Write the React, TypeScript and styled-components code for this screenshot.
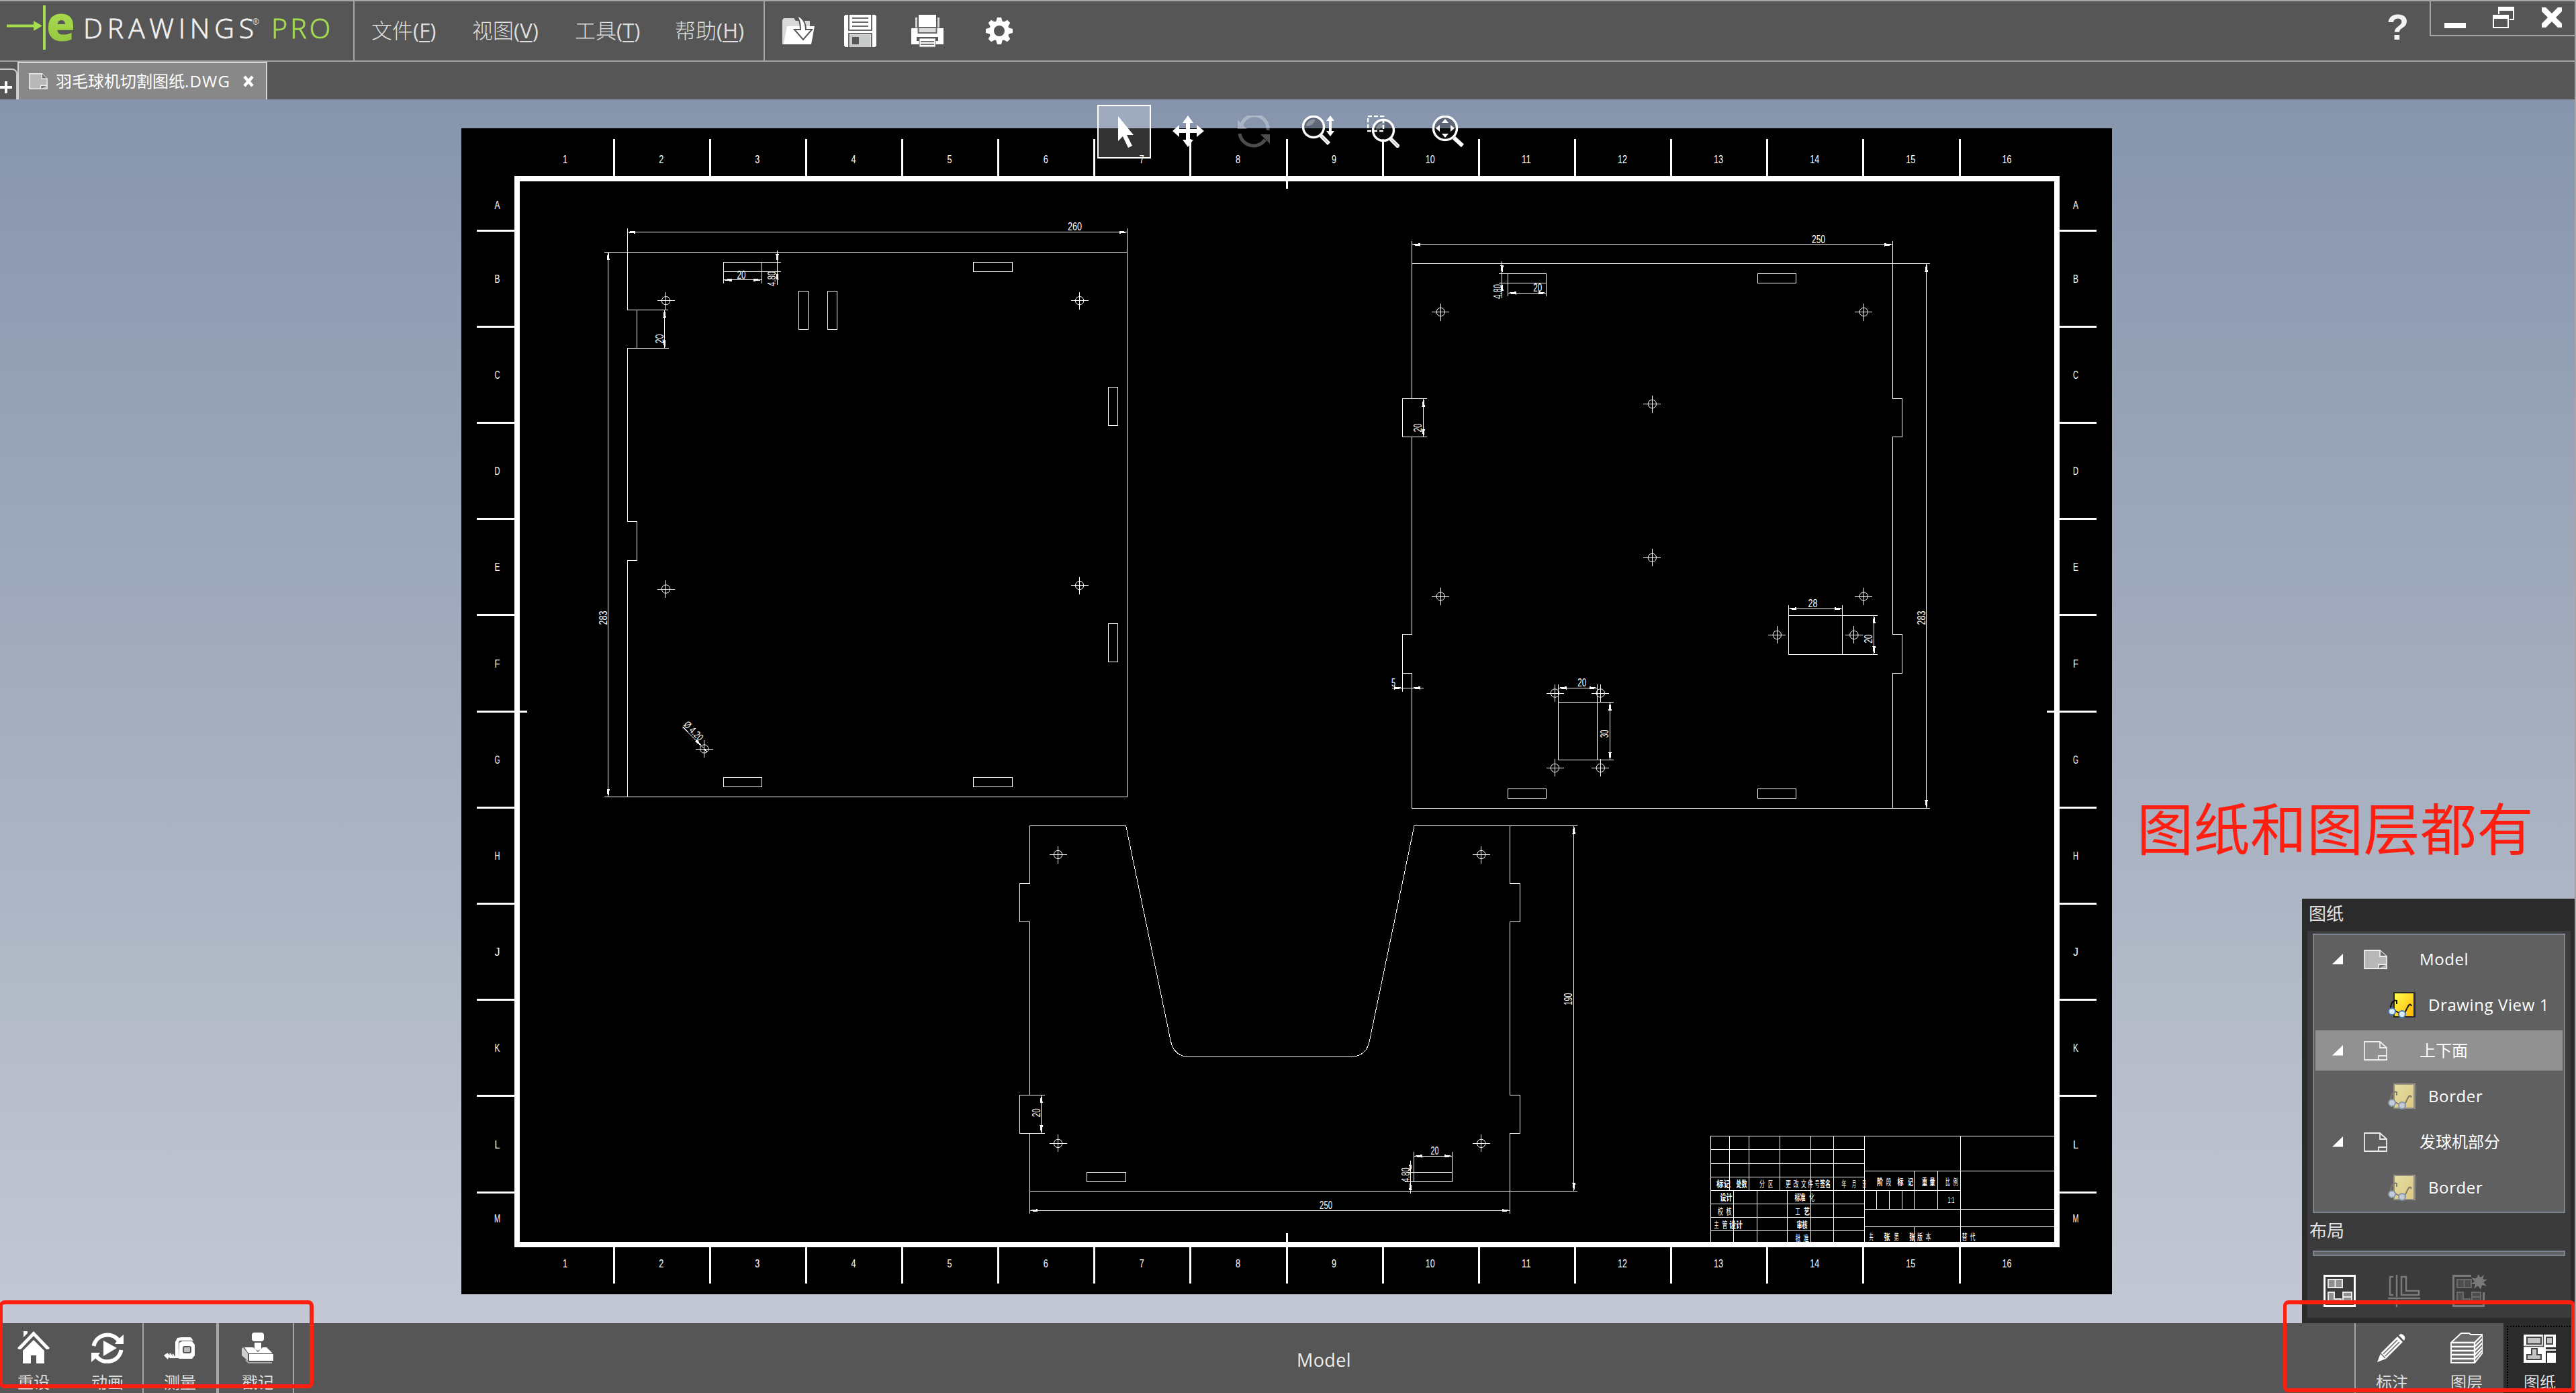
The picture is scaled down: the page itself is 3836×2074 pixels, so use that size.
import React from "react";
import styled, { createGlobalStyle, css } from "styled-components";

const UI_FONT = `"Open Sans", "Noto Sans CJK SC", sans-serif`;

const GlobalStyle = createGlobalStyle`
  * { box-sizing: border-box; }
  body { margin: 0; background: #555655; font-family: ${UI_FONT}; overflow: hidden; }
`;

/* ---------- shell ---------- */

const Window = styled.div`
  position: relative;
  display: flex;
  flex-direction: column;
  width: 3836px;
  height: 2074px;
  border-right: 2px solid #a6a6a6;
  background: #555655;
  overflow: hidden;
`;

const Header = styled.header`
  display: flex;
  flex: none;
  height: 92px;
  border-top: 2px solid #a6a6a6;
  border-bottom: 2px solid #a6a6a6;
`;

const Brand = styled.div`
  width: 528px;
  border-right: 2px solid #a6a6a6;
`;

const MenuBar = styled.nav`
  display: flex;
  align-items: center;
  width: 611px;
  padding: 0 0 3px 25px;
  border-right: 2px solid #a6a6a6;
`;

const MenuItem = styled.span<{ $w: number }>`
  width: ${(p) => p.$w}px;
  color: #dedede;
  font-size: 31px;
  font-weight: 300;
  line-height: 40px;
  white-space: nowrap;
`;

const AccessKey = styled.span`
  font-weight: 400;
  u { text-underline-offset: 4px; text-decoration-thickness: 2px; }
`;

const QuickBar = styled.div`
  display: flex;
  align-items: center;
  flex: 1;
  gap: 50px;
  padding: 0 0 0 25px;
`;

const QuickSlot = styled.div<{ $shift: number }>`
  display: flex;
  margin-left: ${(p) => p.$shift}px;
`;

const HelpMark = styled.div`
  width: 98px;
  padding: 3px 0 0 34px;
  color: #f2f2f2;
  font: 700 54px/70px "Liberation Sans", sans-serif;
`;

const WindowControls = styled.div`
  display: flex;
  width: 216px;
  height: 52px;
  border-left: 2px solid #a6a6a6;
  border-bottom: 2px solid #a6a6a6;
`;

const TabStrip = styled.div`
  display: flex;
  align-items: flex-end;
  flex: none;
  height: 56px;
`;

const NewTab = styled.div`
  display: flex;
  align-items: center;
  width: 26px;
  height: 46px;
  padding-top: 8px;
  border-top: 2px solid #c9c9c9;
  border-right: 2px solid #c9c9c9;
  border-top-right-radius: 8px;
`;

const FileTab = styled.div`
  display: flex;
  align-items: center;
  width: 372px;
  height: 56px;
  padding: 0 0 0 15px;
  border: 2px solid #d4d4d4;
  border-bottom: none;
  background: #888888;
`;

const FileName = styled.span`
  width: 290px;
  padding-left: 12px;
  color: #ffffff;
  font-size: 24px;
  line-height: 30px;
  white-space: nowrap;
`;

const Extension = styled.span`
  letter-spacing: 1.2px;
`;

/* ---------- viewport ---------- */

const Viewport = styled.main`
  flex: 1;
  padding: 43px 0 0 687px;
  background: linear-gradient(180deg, #8695ad 0%, #8e9bb1 12%, #a9b2c2 58%, #c4c8d4 100%);
`;

const SheetDrawing = styled.svg`
  display: block;
  background: #000000;
`;

const ViewTools = styled.div`
  position: absolute;
  left: 1634px;
  top: 156px;
  display: flex;
  gap: 16.4px;
`;

const ToolButton = styled.button<{ $on?: boolean; $dim?: boolean }>`
  display: flex;
  align-items: center;
  justify-content: center;
  width: 80px;
  height: 80px;
  padding: 0;
  border: 2px solid transparent;
  background: transparent;
  ${(p) =>
    p.$on &&
    css`
      border-color: #ffffff;
      background: rgba(255, 255, 255, 0.2);
    `}
  ${(p) => p.$dim && css` opacity: 0.3; `}
`;

/* ---------- sheets panel ---------- */

const Panel = styled.aside`
  position: absolute;
  left: 3428px;
  top: 1338px;
  width: 406px;
  height: 632px;
  padding: 0 6px 8px 8px;
  background: #2b2b2b;
`;

const PanelTitle = styled.h2<{ $h: number }>`
  margin: 0;
  height: ${(p) => p.$h}px;
  padding: 4px 0 0 2px;
  color: #e4e4e4;
  font-size: 26px;
  font-weight: 400;
  line-height: 36px;
`;

const PanelBody = styled.div`
  height: 576px;
  padding: 4px 8px 0 8px;
  background: #3b3b3b;
`;

const Tree = styled.ul`
  display: flex;
  flex-direction: column;
  gap: 8px;
  margin: 0;
  height: 416px;
  padding: 6px 2px;
  border: 2px solid #7d848f;
  background: #606060;
  list-style: none;
`;

const TreeRow = styled.li<{ $selected?: boolean; $child?: boolean }>`
  display: flex;
  align-items: center;
  height: 60px;
  padding-left: ${(p) => (p.$child ? 108 : 25)}px;
  background: ${(p) => (p.$selected ? "#919191" : "transparent")};
  color: #ffffff;
  font-size: 24px;
  white-space: nowrap;
  gap: ${(p) => (p.$child ? 19 : 31)}px;
`;

const TreeLabel = styled.span<{ $indent?: number; $latin?: boolean }>`
  padding-left: ${(p) => p.$indent ?? 0}px;
  letter-spacing: ${(p) => (p.$latin ? "0.6px" : "normal")};
  line-height: 32px;
`;

const LayoutTitle = styled(PanelTitle)`
  margin-left: -8px;
  padding: 8px 0 0 3px;
`;

const LayoutSlot = styled.div`
  height: 8px;
  border: 2px solid #7d848f;
  background: #606060;
`;

const LayoutTools = styled.div`
  display: flex;
  gap: 48px;
  padding: 28px 0 0 16px;
`;

const Faded = styled.span`
  display: flex;
  opacity: 0.32;
`;

/* ---------- bottom bar ---------- */

const BottomBar = styled.footer`
  display: flex;
  flex: none;
  height: 104px;
`;

const BarGroup = styled.div<{ $pl: number; $pr: number; $gap?: number; $line?: number }>`
  display: flex;
  gap: ${(p) => p.$gap ?? 0}px;
  padding: 12px ${(p) => p.$pr}px 0 ${(p) => p.$pl}px;
  border-right: ${(p) => p.$line ?? 0}px solid #a6a6a6;
`;

const BarItem = styled.div`
  display: flex;
  flex-direction: column;
  gap: 13px;
  width: 48px;
  color: #dedede;
  font-size: 24px;
  line-height: 30px;
  white-space: nowrap;
`;

const ActiveSlot = styled.div`
  width: 106px;
  padding: 4px 2px 0 5px;
  background: #2b2b2b;
`;

const FocusFrame = styled.div`
  height: 110px;
  padding: 6px 0 0 23px;
  border: 2px dotted #000000;
`;

const SheetName = styled.div`
  flex: 1;
  padding: 32px 0 0 1493px;
  color: #ececec;
  font-size: 27px;
  letter-spacing: 0.4px;
  line-height: 46px;
`;

/* ---------- red mark-up over the window ---------- */

const MarkBox = styled.div<{ $l: number; $w: number; $h: number }>`
  position: absolute;
  left: ${(p) => p.$l}px;
  top: 1936px;
  width: ${(p) => p.$w}px;
  height: ${(p) => p.$h}px;
  border: 6px solid #ff1f10;
  border-left-width: 5px;
  border-radius: 8px;
`;

const MarkText = styled.div`
  position: absolute;
  left: 3182px;
  top: 1174px;
  color: #ff1f10;
  font-size: 84px;
  letter-spacing: 0.4px;
  line-height: 120px;
  white-space: nowrap;
`;

/* ---------- CAD primitives ---------- */

type TextProps = { x: number; y: number; w: number; s?: number; r?: number; bold?: boolean; children: string };

const CadText = styled.text`
  fill: #ffffff;
  stroke: none;
  text-anchor: middle;
  font-family: "Liberation Sans", "Noto Sans CJK SC", sans-serif;
`;

const T = ({ x, y, w, s = 16, r = 0, bold, children }: TextProps) => (
  <CadText
    x={0}
    y={s * 0.36}
    fontSize={s}
    fontWeight={bold ? 700 : 400}
    textLength={w}
    lengthAdjust="spacingAndGlyphs"
    transform={`translate(${x} ${y}) rotate(${r})`}
  >
    {children}
  </CadText>
);

const Arrow = ({ x, y, r }: { x: number; y: number; r: number }) => (
  <path d="M0 0L2-0.8 12-2.2V2.2L2 0.8Z" fill="#fff" stroke="none" transform={`translate(${x} ${y}) rotate(${r})`} />
);

const HDim = ({ a, b, y }: { a: number; b: number; y: number }) => (
  <g>
    <path d={`M${a} ${y}H${b}`} />
    <Arrow x={a} y={y} r={0} />
    <Arrow x={b} y={y} r={180} />
  </g>
);

const VDim = ({ a, b, x }: { a: number; b: number; x: number }) => (
  <g>
    <path d={`M${x} ${a}V${b}`} />
    <Arrow x={x} y={a} r={90} />
    <Arrow x={x} y={b} r={-90} />
  </g>
);

const Hole = ({ x, y }: { x: number; y: number }) => (
  <g>
    <circle cx={x} cy={y} r={6.2} shapeRendering="auto" />
    <path d={`M${x - 13} ${y}H${x + 13}M${x} ${y - 13}V${y + 13}`} />
  </g>
);

const HSlot = ({ x, y, w = 57.5 }: { x: number; y: number; w?: number }) => <rect x={x} y={y} width={w} height={14} />;
const VSlot = ({ x, y }: { x: number; y: number }) => <rect x={x} y={y} width={14.4} height={57} />;

const PITCH = 143.13;
const ROWS = ["A", "B", "C", "D", "E", "F", "G", "H", "J", "K", "L", "M"];
const rowY = (i: number) => (i === 0 ? 304.5 : i === 11 ? 1814 : 414.6 + (i - 1) * 143.2);

const SheetFrame = () => (
  <g>
    <rect x={769.5} y={266} width={2293.5} height={1586.5} strokeWidth={8} />
    <g strokeWidth={3}>
      {Array.from({ length: 15 }, (_, i) => {
        const x = 914.2 + i * PITCH;
        return <path key={i} d={`M${x} 207V${i === 7 ? 281 : 264}M${x} ${i === 7 ? 1836 : 1854}V1911`} />;
      })}
      {Array.from({ length: 11 }, (_, i) => {
        const y = 343 + i * 143.2;
        return <path key={i} d={`M710 ${y}H${i === 5 ? 785 : 768}M${i === 5 ? 3048 : 3064} ${y}H3122`} />;
      })}
    </g>
    {Array.from({ length: 16 }, (_, i) => {
      const x = 841.5 + i * PITCH;
      const w = i > 8 ? 14 : 7;
      return (
        <g key={i}>
          <T x={x} y={237} w={w} s={17}>{String(i + 1)}</T>
          <T x={x} y={1881} w={w} s={17}>{String(i + 1)}</T>
        </g>
      );
    })}
    {ROWS.map((r, i) => (
      <g key={r}>
        <T x={740.5} y={rowY(i)} w={r === "M" ? 9 : 8} s={17}>{r}</T>
        <T x={3091} y={rowY(i)} w={r === "M" ? 9 : 8} s={17}>{r}</T>
      </g>
    ))}
  </g>
);

const PlateOne = () => (
  <g>
    <path d="M934.3 375.4H1678.5V1186.6H934.3V834.4H948.7V776.3H934.3V518.5H948.7V461H934.3Z" />
    <path d="M934.3 375.4V340M1678.5 375.4V340M900 375.4H934.3M900 1186.6H934.3" />
    <HDim a={934.3} b={1678.5} y={345.6} />
    <T x={1600.4} y={337.5} w={21}>260</T>
    <VDim a={375.4} b={1186.6} x={905.7} />
    <T x={898.5} y={920} w={21} r={-90}>283</T>
    <path d="M948.7 461H995M948.7 518.5H996" />
    <VDim a={461} b={518.5} x={989.6} />
    <T x={982.5} y={504.5} w={14} r={-90}>20</T>
    <HSlot x={1077.5} y={390.4} w={56.5} />
    <HSlot x={1449.5} y={390.4} />
    <HSlot x={1077.5} y={1157.6} w={56.5} />
    <HSlot x={1449.5} y={1157.6} />
    <VSlot x={1189.3} y={433.5} />
    <VSlot x={1232.3} y={433.5} />
    <VSlot x={1650.5} y={576.5} />
    <VSlot x={1650.5} y={928.4} />
    <path d="M1077.5 404V421.5M1134 404V421.5M1134 390.4H1162.7M1134 404.4H1162.7M1157.5 372.7V424" />
    <HDim a={1077.5} b={1134} y={416.8} />
    <Arrow x={1157.5} y={390.4} r={-90} />
    <Arrow x={1157.5} y={404.4} r={90} />
    <T x={1104} y={409} w={13}>20</T>
    <T x={1149.7} y={415} w={22} r={-90}>4.80</T>
    <Hole x={991.6} y={447.7} />
    <Hole x={1607.6} y={447.7} />
    <Hole x={991.6} y={877} />
    <Hole x={1607.6} y={871.6} />
    <Hole x={1048.8} y={1115} />
    <path d="M1016.3 1081.8L1053 1119.4" />
    <Arrow x={1044.5} y={1110.6} r={-134} />
    <T x={1033} y={1088} w={34} r={45} s={15}>Ø 4.20</T>
  </g>
);

const PlateTwo = () => (
  <g>
    <path d="M2102.6 392.5H2818.3V593.6H2832.7V650.5H2818.3V944.7H2832.7V1002.3H2818.3V1203.3H2102.6V1002.3H2088.2V944.7H2102.6V650.5H2088.2V593.6H2102.6Z" />
    <path d="M2102.6 392.5V358.7M2818.3 392.5V358.7M2818.3 392.5H2874M2818.3 1203.3H2874" />
    <HDim a={2102.6} b={2818.3} y={364.4} />
    <T x={2708} y={356.3} w={20}>250</T>
    <VDim a={392.5} b={1203.3} x={2868.6} />
    <T x={2860.8} y={920} w={21} r={-90}>283</T>
    <path d="M2102.6 593.6H2125M2102.6 650.5H2125M2088.2 1002.3V1029.5M2073.3 1024.4H2119.8" />
    <VDim a={593.6} b={650.5} x={2119.6} />
    <T x={2111.5} y={637} w={13} r={-90}>20</T>
    <Arrow x={2088.2} y={1024.4} r={180} />
    <Arrow x={2102.6} y={1024.4} r={0} />
    <T x={2075} y={1016.5} w={6}>5</T>
    <HSlot x={2245.5} y={407.4} w={57} />
    <HSlot x={2617.4} y={407.4} />
    <HSlot x={2245.5} y={1174.4} w={57} />
    <HSlot x={2617.4} y={1174.4} />
    <path d="M2236.7 389V444M2231.7 407.4H2245.5M2231.7 421.4H2245.5M2245.5 421V441M2302.5 421V441" />
    <Arrow x={2236.7} y={407.4} r={-90} />
    <Arrow x={2236.7} y={421.4} r={90} />
    <HDim a={2245.5} b={2302.5} y={436.4} />
    <T x={2289.7} y={428.5} w={13}>20</T>
    <T x={2230} y={434} w={22} r={-90}>4.80</T>
    <Hole x={2145.3} y={464.5} />
    <Hole x={2775.3} y={464.5} />
    <Hole x={2460.3} y={601.5} />
    <Hole x={2460.3} y={830.4} />
    <Hole x={2145.3} y={888} />
    <Hole x={2775.3} y={888} />
    <Hole x={2646.3} y={945.4} />
    <Hole x={2760.9} y={945.4} />
    <Hole x={2315.5} y={1032} />
    <Hole x={2383.3} y={1032} />
    <Hole x={2315.5} y={1143.4} />
    <Hole x={2383.3} y={1143.4} />
    <rect x={2663.4} y={916.4} width={80.4} height={58} />
    <path d="M2663.4 916.4V901M2743.8 916.4V901M2743.8 916.4H2796M2743.8 974.4H2796" />
    <HDim a={2663.4} b={2743.8} y={906.4} />
    <T x={2699.5} y={898.5} w={14}>28</T>
    <VDim a={916.4} b={974.4} x={2790.6} />
    <T x={2782.7} y={951.2} w={13} r={-90}>20</T>
    <rect x={2320.7} y={1045.6} width={58} height={86} />
    <path d="M2320.7 1045.6V1019M2378.7 1045.6V1019M2378.7 1045.6H2402.8M2378.7 1131.6H2402.8" />
    <HDim a={2320.7} b={2378.7} y={1024.4} />
    <T x={2355.7} y={1016.5} w={13}>20</T>
    <VDim a={1045.6} b={1131.6} x={2397.5} />
    <T x={2389.6} y={1092.4} w={12} r={-90}>30</T>
  </g>
);

const PlateThree = () => (
  <g>
    <path d="M1533.4 1229.5H1676.6L1743.5 1550.7Q1748.6 1573.4 1771.6 1573.4H2011Q2034 1573.4 2039.2 1550.7L2106 1229.5H2248.6V1315.6H2263.6V1372.4H2248.6V1630.4H2263.6V1687.4H2248.6V1773.4H1533.4V1687.4H1518.4V1630.4H1533.4V1372.4H1518.4V1315.6H1533.4Z" />
    <path d="M2248.6 1229.5H2349M2248.6 1773.4H2349M1533.4 1773.4V1807.4M2248.6 1773.4V1807.4" />
    <VDim a={1229.5} b={1773.4} x={2343.6} />
    <T x={2335.6} y={1487.4} w={18} r={-90}>190</T>
    <HDim a={1533.4} b={2248.6} y={1802.4} />
    <T x={1974.6} y={1794.6} w={19}>250</T>
    <path d="M1533.4 1630.4H1556.3M1533.4 1687.4H1556.3" />
    <VDim a={1630.4} b={1687.4} x={1550.6} />
    <T x={1542.8} y={1656.8} w={13} r={-90}>20</T>
    <HSlot x={1618.6} y={1745.5} w={58} />
    <HSlot x={2105.5} y={1745.5} w={57} />
    <path d="M2105.5 1745V1715.4M2162.5 1745V1715.4M2100.4 1727.6V1776.7M2095 1745.5H2105.5M2092 1759.5H2105.5" />
    <HDim a={2105.5} b={2162.5} y={1721.4} />
    <T x={2136.6} y={1713.5} w={12}>20</T>
    <Arrow x={2100.4} y={1745.5} r={-90} />
    <Arrow x={2100.4} y={1759.5} r={90} />
    <T x={2092.8} y={1749.3} w={22} r={-90}>4.80</T>
    <Hole x={1575.6} y={1272.5} />
    <Hole x={2205.8} y={1272.5} />
    <Hole x={1575.6} y={1702.4} />
    <Hole x={2205.8} y={1702.4} />
  </g>
);

const CELLS: [string, number, number, number, boolean?][] = [
  ["标记", 2566.5, 1762.5, 21, true],
  ["处数", 2593.5, 1762.5, 16, true],
  ["分", 2624, 1762.5, 8],
  ["区", 2636.5, 1762.5, 7],
  ["更", 2663, 1762.5, 8],
  ["改", 2674.5, 1762.5, 8],
  ["文", 2686, 1762.5, 8],
  ["件", 2696, 1762.5, 8],
  ["号", 2706, 1762.5, 7],
  ["签名", 2718, 1762.5, 16, true],
  ["年", 2746, 1762.5, 7],
  ["月", 2761, 1762.5, 6],
  ["日", 2776, 1762.5, 6],
  ["设计", 2570.5, 1782, 18, true],
  ["标准", 2680.5, 1782, 16, true],
  ["化", 2698, 1782, 8],
  ["校", 2562, 1803, 8],
  ["核", 2574.5, 1803, 8],
  ["工", 2677, 1803, 7],
  ["艺", 2690.5, 1803, 9, true],
  ["主", 2556, 1823.5, 7],
  ["管", 2568.5, 1823.5, 8],
  ["设计", 2585, 1823.5, 20, true],
  ["审核", 2683.5, 1823.5, 16, true],
  ["批", 2677.5, 1843, 8],
  ["准", 2689.5, 1843, 8],
  ["阶", 2799.5, 1759, 9, true],
  ["段", 2812.5, 1759, 8],
  ["标", 2830, 1759, 9, true],
  ["记", 2845, 1759, 8, true],
  ["重", 2866, 1759, 8, true],
  ["量", 2877.5, 1759, 8, true],
  ["比", 2900.5, 1759, 7],
  ["例", 2912, 1759, 7],
  ["1:1", 2905.5, 1786.5, 10],
  ["共", 2786.5, 1841, 6],
  ["张", 2810, 1841, 9, true],
  ["第", 2824, 1841, 7],
  ["张", 2847.5, 1841, 9, true],
  ["版", 2859, 1841, 8],
  ["本", 2871.5, 1841, 8],
  ["替", 2925.5, 1841, 8],
  ["代", 2937.5, 1841, 8],
];

const TitleBlock = () => (
  <g>
    <path d="M2547.6 1850V1691.4H3059M2575.4 1691.4V1772.4M2604.4 1691.4V1772.4M2650.4 1691.4V1772.4M2696.6 1691.4V1849M2730.4 1691.4V1849M2776.5 1691.4V1849M2919.4 1691.4V1849" />
    <path d="M2547.6 1711.4H2776.5M2547.6 1732.4H2776.5M2547.6 1752.4H2776.5M2547.6 1772.4H2919.4M2547.6 1792.4H2776.5M2547.6 1812.4H2776.5M2547.6 1832.4H2776.5" />
    <path d="M2581.4 1772.4V1849M2616.6 1772.4V1849M2661.4 1772.4V1849M2776.5 1743.4H3059M2776.5 1800.4H3059M2776.5 1826.4H3059" />
    <path d="M2850.6 1743.4V1800.4M2885.6 1743.4V1800.4M2794.4 1772.4V1800.4M2813.6 1772.4V1800.4M2832.5 1772.4V1800.4M2850.6 1826.4V1849" />
    {CELLS.map(([t, x, y, w, b], i) => (
      <T key={i} x={x} y={y} w={w} s={13} bold={b}>{t}</T>
    ))}
  </g>
);

/* ---------- icons ---------- */

const Icon = ({ w = 48, h = 48, children }: { w?: number; h?: number; children: React.ReactNode }) => (
  <svg width={w} height={h} viewBox={`0 0 ${w} ${h}`} fill="none">
    {children}
  </svg>
);

const Logo = () => (
  <svg width="526" height="88" viewBox="0 2 526 88">
    <defs>
      <linearGradient id="lime" x1="0" y1="0" x2="0" y2="1">
        <stop offset="0" stopColor="#b9ea5a" />
        <stop offset="1" stopColor="#8cbf3a" />
      </linearGradient>
    </defs>
    <rect x="64" y="8" width="4" height="66" fill="#a6dc50" />
    <path d="M10 36.5H50V31L63 38.5 50 46V40.5H10Z" fill="#a6dc50" />
    <text x="69" y="61" fontFamily="Open Sans, sans-serif" fontWeight="800" fontSize="72" fill="url(#lime)" textLength="43" lengthAdjust="spacingAndGlyphs">e</text>
    <text x="124" y="57" fontFamily="Open Sans, sans-serif" fontWeight="300" fontSize="41" fill="#f0f0f0" stroke="#f0f0f0" strokeWidth="0.8" textLength="254">DRAWINGS</text>
    <text x="376" y="37" fontFamily="Open Sans, sans-serif" fontSize="12" fill="#e0e0e0">®</text>
    <text x="404" y="57" fontFamily="Open Sans, sans-serif" fontWeight="300" fontSize="41" fill="#a6dc50" stroke="#a6dc50" strokeWidth="0.8" textLength="88">PRO</text>
  </svg>
);

const OpenIcon = () => (
  <Icon w={50}>
    <path d="M1 42V8L3 5H18L21 9H42V18H10L4 44H1Z" fill="#d9d9d9" />
    <path d="M8 17H49L44 44H3Z" fill="#fff" />
    <path d="M22 1C31 3 36 12 36 22H45L32 37 19 22H28C28 13 27 7 22 1Z" fill="#fff" stroke="#555655" strokeWidth="2" />
  </Icon>
);

const SaveIcon = () => (
  <Icon w={50} h={50}>
    <path d="M3 1H47L49 3V47L47 49H3L1 47V3Z" fill="#fff" />
    <path d="M8 1V24H42V1M8 49V29H42V49" stroke="#6a6a6a" strokeWidth="2" />
    <rect x="9.5" y="30.5" width="31" height="18.5" fill="#c9cbca" />
    <rect x="13" y="34" width="10" height="11" fill="#555655" />
    <path d="M13 6H37M13 12H37M13 18H37" stroke="#6a6a6a" strokeWidth="2" />
  </Icon>
);

const PrintIcon = () => (
  <Icon w={50} h={50}>
    <path d="M7 5H10V20H7ZM40 5H43V20H40Z" fill="#d6d6d6" />
    <path d="M1 21H49V45H1Z" fill="#fff" />
    <rect x="12" y="1" width="26" height="19" fill="#fff" />
    <path d="M11.500 20V28H38.500V20Z" fill="#dcdcdc" stroke="#6a6a6a" strokeWidth="2" />
    <path d="M9 34H41V40H9Z" fill="#555655" />
    <path d="M13 36H37V49H13Z" fill="#fff" stroke="#777" />
    <path d="M15 41H35M15 45H35" stroke="#777" strokeWidth="2" />
  </Icon>
);

const GearIcon = () => (
  <Icon w={42} h={42}>
    <circle cx="21" cy="21" r="11.5" stroke="#fff" strokeWidth="7" />
    {[0, 45, 90, 135, 180, 225, 270, 315].map((a) => (
      <path key={a} d="M16 8L18 1H24L26 8Z" fill="#fff" transform={`rotate(${a} 21 21)`} />
    ))}
  </Icon>
);

const DocIcon = ({ filled, w = 35, h = 29 }: { filled?: boolean; w?: number; h?: number }) => (
  <svg width={w} height={h} viewBox="0 0 35 29" preserveAspectRatio="none">
    <path d="M1 1H24L34 10V28H1Z" fill={filled ? "#b8b8b8" : "none"} stroke="#ececec" strokeWidth="1.8" />
    <path d="M24 1V10H34M34 22H22V28" fill={filled ? "#6e6e6e" : "none"} stroke="#ececec" strokeWidth="1.8" />
  </svg>
);

const GlassesIcon = ({ faded }: { faded?: boolean }) => (
  <svg width="41" height="41" viewBox="0 0 41 41">
    <defs>
      <linearGradient id="note" x1="0" y1="0" x2="1" y2="1">
        <stop offset="0" stopColor="#ffff50" />
        <stop offset="1" stopColor="#ffb400" />
      </linearGradient>
      <linearGradient id="noteFaded" x1="0" y1="0" x2="1" y2="1">
        <stop offset="0" stopColor="#e2dfa4" />
        <stop offset="1" stopColor="#dfc77c" />
      </linearGradient>
    </defs>
    <rect x="8" y="1" width="33" height="38" fill={faded ? "#8f8d86" : "#2a2a2a"} />
    <rect x="10" y="3" width="28" height="34" fill={faded ? "url(#noteFaded)" : "url(#note)"} />
    <path d="M4 25C4 17 9 12 13 14V19M25 32L29 24Q33 16 35 22M11 29L16 32" fill="none" stroke={faded ? "#7c7a70" : "#111"} strokeWidth="2" />
    <circle cx="6" cy="30" r="5" fill={faded ? "#c3ccd6" : "#dcecff"} stroke={faded ? "#8796a8" : "#4c78b0"} strokeWidth="2" />
    <circle cx="21" cy="34" r="5" fill={faded ? "#c3ccd6" : "#dcecff"} stroke={faded ? "#8796a8" : "#4c78b0"} strokeWidth="2" />
  </svg>
);

const Caret = () => (
  <svg width="16" height="16" viewBox="0 0 16 16">
    <path d="M16 0V15.500H0Z" fill="#fff" />
  </svg>
);

const Magnifier = ({ x, y }: { x: number; y: number }) => (
  <g transform={`translate(${x} ${y})`}>
    <circle r="15.500" fill="rgba(20,20,20,0.35)" stroke="#fff" strokeWidth="3.4" />
    <path d="M-11-1A11 11 0 0 1 3-11 14 14 0 0 1-11-1Z" fill="rgba(255,255,255,0.28)" />
    <path d="M11 13L23 25" stroke="#fff" strokeWidth="6" />
    <path d="M12 14L22 24" stroke="#b5b5b5" strokeWidth="1.200" />
  </g>
);

const BoardIcon = () => (
  <Icon>
    <path d="M1.500 1.500H46.500V46.500H1.500Z" stroke="#fff" strokeWidth="3" />
    <path d="M7 7H28V19H7ZM17.500 7V19M7 26H16V36H26V42H7ZM29 26H42V42H29ZM29 33H42" stroke="#e8e8e8" strokeWidth="2" fill="#8f8f8f" />
  </Icon>
);

const App = () => (
  <>
    <GlobalStyle />
    <Window>
      <Header>
        <Brand>
          <Logo />
        </Brand>
        <MenuBar>
          <MenuItem $w={150}>文件<AccessKey>(<u>F</u>)</AccessKey></MenuItem>
          <MenuItem $w={153}>视图<AccessKey>(<u>V</u>)</AccessKey></MenuItem>
          <MenuItem $w={149}>工具<AccessKey>(<u>T</u>)</AccessKey></MenuItem>
          <MenuItem $w={110}>帮助<AccessKey>(<u>H</u>)</AccessKey></MenuItem>
        </MenuBar>
        <QuickBar>
          <OpenIcon />
          <QuickSlot $shift={-8}>
            <SaveIcon />
          </QuickSlot>
          <PrintIcon />
          <QuickSlot $shift={11}>
            <GearIcon />
          </QuickSlot>
        </QuickBar>
        <HelpMark>?</HelpMark>
        <WindowControls>
          <svg width="214" height="50" viewBox="3620 2 214 50" fill="#fff">
            <rect x="3640" y="34" width="32" height="8" />
            <path d="M3720 10H3744V30H3737V28H3742V16H3722V21H3720Z" />
            <path d="M3712 22H3736V42H3712ZM3714 28V40H3734V28Z" fillRule="evenodd" />
            <path d="M3785 11H3791L3800 20 3809 11H3815V17L3806 26 3815 35V41H3809L3800 32 3791 41H3785V35L3794 26 3785 17Z" />
          </svg>
        </WindowControls>
      </Header>

      <TabStrip>
        <NewTab>
          <svg width="19" height="20" viewBox="0 0 19 20" fill="#fff">
            <path d="M0 8H7V1H11V8H18V12H11V19H7V12H0Z" />
          </svg>
        </NewTab>
        <FileTab>
          <DocIcon filled w={28} h={24} />
          <FileName>羽毛球机切割图纸<Extension>.DWG</Extension></FileName>
          <svg width="18" height="18" viewBox="0 0 18 18">
            <path d="M3 2L15 16M15 2L3 16" stroke="#fff" strokeWidth="4.400" />
          </svg>
        </FileTab>
      </TabStrip>

      <Viewport>
        <SheetDrawing width={2458} height={1736} viewBox="687 191 2458 1736" fill="none" stroke="#fff" strokeWidth={1} shapeRendering="crispEdges">
          <SheetFrame />
          <PlateOne />
          <PlateTwo />
          <PlateThree />
          <TitleBlock />
        </SheetDrawing>
      </Viewport>

      <BottomBar>
        <BarGroup $pl={26} $pr={28} $gap={62} $line={2}>
          <BarItem>
            <Icon>
              <path d="M9 0H15V3L9 9ZM0 25L24 0 48 25 46 27H43L24 7 5 27H2Z" fill="#fff" />
              <path d="M24 13L40 29V48H28V36H20V48H8V29Z" fill="#fff" />
            </Icon>
            重设
          </BarItem>
          <BarItem>
            <Icon>
              <path d="M3.500 22A21 21 0 0 1 40 13M44.500 28A21 21 0 0 1 8 38" stroke="#fff" strokeWidth="6" />
              <path d="M48 5V19H35L39 13ZM0 46V32H13L9 38ZM18 14L38 25 18 37Z" fill="#fff" />
            </Icon>
            动画
          </BarItem>
        </BarGroup>
        <BarGroup $pl={30} $pr={30} $line={4}>
          <BarItem>
            <Icon>
              <path d="M20 10L26 9H40L44 14H24L22 16V40H17V16Z" fill="#fff" />
              <path d="M23 17L27 15H42L46 20V36L42 41H22Z" fill="#fff" />
              <rect x="29" y="23" width="11" height="9" rx="2" fill="#bdbdbd" stroke="#555" strokeWidth="2" />
              <path d="M0 36L4 33 8 37 6 42ZM7 34L20 40H10Z" fill="#fff" />
              <path d="M5 33L10 40M9 33L14 40M13 34L17 40" stroke="#fff" strokeWidth="2" />
            </Icon>
            测量
          </BarItem>
        </BarGroup>
        <BarGroup $pl={34} $pr={28} $line={2}>
          <BarItem>
            <Icon>
              <rect x="15" y="2" width="18" height="13" rx="4" fill="#fff" />
              <path d="M19 17H29V27L24 29 19 27Z" fill="#fff" />
              <path d="M4 24H17L24 31 31 24H37L46 33H10Z" fill="#fff" />
              <path d="M0 26L2 24 9 33V44L0 36Z" fill="#cfcfcf" />
              <rect x="11" y="34" width="36" height="10" fill="#fff" />
              <path d="M6 43L10 47H45" stroke="#a8a8a8" strokeWidth="2" />
            </Icon>
            戳记
          </BarItem>
        </BarGroup>
        <SheetName>Model</SheetName>
        <BarGroup $pl={0} $pr={0} $line={2} />
        <BarGroup $pl={30} $pr={31} $gap={63}>
          <BarItem>
            <Icon>
              <path d="M2 46L7 33 32 8 40 16 15 41Z" fill="#fff" />
              <path d="M34 6L37 4Q40 4 43 8 44 11 42 14Z" fill="#fff" />
              <path d="M11 34L32 13M14 37L35 16M7 33L14 40" stroke="#666" strokeWidth="1.500" />
            </Icon>
            标注
          </BarItem>
          <BarItem>
            <Icon>
              <path d="M1 17L16 3H28L30 5H48V32L36 47H1Z" fill="#6a6a6a" stroke="#fff" strokeWidth="2" />
              <path d="M1 17H36V47M36 17L48 5M1 23H36L48 11M1 29H36L48 17M1 35H36L48 23M1 41H36L48 28" stroke="#fff" strokeWidth="2.400" />
            </Icon>
            图层
          </BarItem>
        </BarGroup>
        <ActiveSlot>
          <FocusFrame>
            <BarItem>
              <Icon>
                <path d="M0 5H48V24H33V47H0ZM35 32H48V47H35ZM33 27H48V29H33Z" fill="#fff" />
                <path d="M5 9H26V19H5ZM34 9H43V19H34ZM12 26H20V35H26V42H5V35H12Z" fill="#c4c4c4" stroke="#444" strokeWidth="2" />
                <path d="M29.500 5V24M0 22.500H29" stroke="#444" strokeWidth="1.500" />
              </Icon>
              图纸
            </BarItem>
          </FocusFrame>
        </ActiveSlot>
      </BottomBar>

      <ViewTools>
        <ToolButton $on>
          <Icon>
            <path d="M15 1V38L22 31 30 48 36 45 28 29H38Z" fill="#fff" />
          </Icon>
        </ToolButton>
        <ToolButton>
          <Icon>
            <path d="M23 0L31 11H26V20H36V14L47 23 36 32V26H26V36H31L23 47 15 36H20V26H10V32L0 23 10 14V20H20V11H15Z" fill="#fff" />
          </Icon>
        </ToolButton>
        <ToolButton $dim>
          <Icon>
            <path d="M5 18A20 20 0 0 1 45 22M3 27A21 21 0 0 0 41 36" stroke="#ffffff" strokeWidth="5" />
            <path d="M0 6V20H14ZM48 42V28H34Z" fill="#ffffff" />
          </Icon>
        </ToolButton>
        <ToolButton>
          <Icon>
            <Magnifier x={17} y={17} />
            <path d="M42 0L48 8H44V23H48L42 31 36 23H40V8H36Z" fill="#fff" />
          </Icon>
        </ToolButton>
        <ToolButton>
          <Icon>
            <Magnifier x={24} y={22} />
            <path d="M1 1H24V23H1Z" stroke="#fff" strokeWidth="2.600" strokeDasharray="6 3" />
          </Icon>
        </ToolButton>
        <ToolButton>
          <Icon>
            <circle cx="20" cy="19" r="17.500" fill="rgba(20,20,20,0.35)" stroke="#fff" strokeWidth="3.400" />
            <path d="M33 33L46 45" stroke="#fff" strokeWidth="6" />
            <path d="M20 5L25 11H15ZM20 33L25 27H15ZM6 19L12 14V24ZM34 19L28 14V24Z" fill="#fff" />
          </Icon>
        </ToolButton>
      </ViewTools>

      <Panel>
        <PanelTitle $h={48}>图纸</PanelTitle>
        <PanelBody>
          <Tree>
            <TreeRow>
              <Caret />
              <DocIcon filled />
              <TreeLabel $indent={17} $latin>Model</TreeLabel>
            </TreeRow>
            <TreeRow $child>
              <GlassesIcon />
              <TreeLabel $latin>Drawing View 1</TreeLabel>
            </TreeRow>
            <TreeRow $selected>
              <Caret />
              <DocIcon />
              <TreeLabel $indent={17}>上下面</TreeLabel>
            </TreeRow>
            <TreeRow $child>
              <GlassesIcon faded />
              <TreeLabel $latin>Border</TreeLabel>
            </TreeRow>
            <TreeRow>
              <Caret />
              <DocIcon />
              <TreeLabel $indent={17}>发球机部分</TreeLabel>
            </TreeRow>
            <TreeRow $child>
              <GlassesIcon faded />
              <TreeLabel $latin>Border</TreeLabel>
            </TreeRow>
          </Tree>
          <LayoutTitle $h={56}>布局</LayoutTitle>
          <LayoutSlot />
          <LayoutTools>
            <BoardIcon />
            <Faded>
              <Icon>
                <path d="M8 3H3V30H8M13 0V33M13 37V48M0 35H48M20 3H27V24H46V30H20Z" stroke="#fff" strokeWidth="2.500" />
              </Icon>
            </Faded>
            <Faded>
              <Icon w={52}>
                <path d="M28 1.500H1.500V46.500H46.500V26" stroke="#fff" strokeWidth="3" />
                <path d="M7 7H28V19H7ZM17.500 7V19M7 26H16V36H26V42H7ZM29 26H42V42H29ZM29 33H42" stroke="#ccc" strokeWidth="2" fill="#777" />
                <path d="M39-2L41 5 47 0 45 7 52 7 46 11 51 17 44 15 42 22 38 16 32 21 34 14 27 14 33 10 28 4 36 6Z" fill="#fff" />
                <circle cx="40" cy="10" r="7" fill="#fff" />
              </Icon>
            </Faded>
          </LayoutTools>
        </PanelBody>
      </Panel>

      <MarkText>图纸和图层都有</MarkText>
      <MarkBox $l={-1} $w={468} $h={131} />
      <MarkBox $l={3400} $w={435} $h={137} />
    </Window>
  </>
);

export default App;
